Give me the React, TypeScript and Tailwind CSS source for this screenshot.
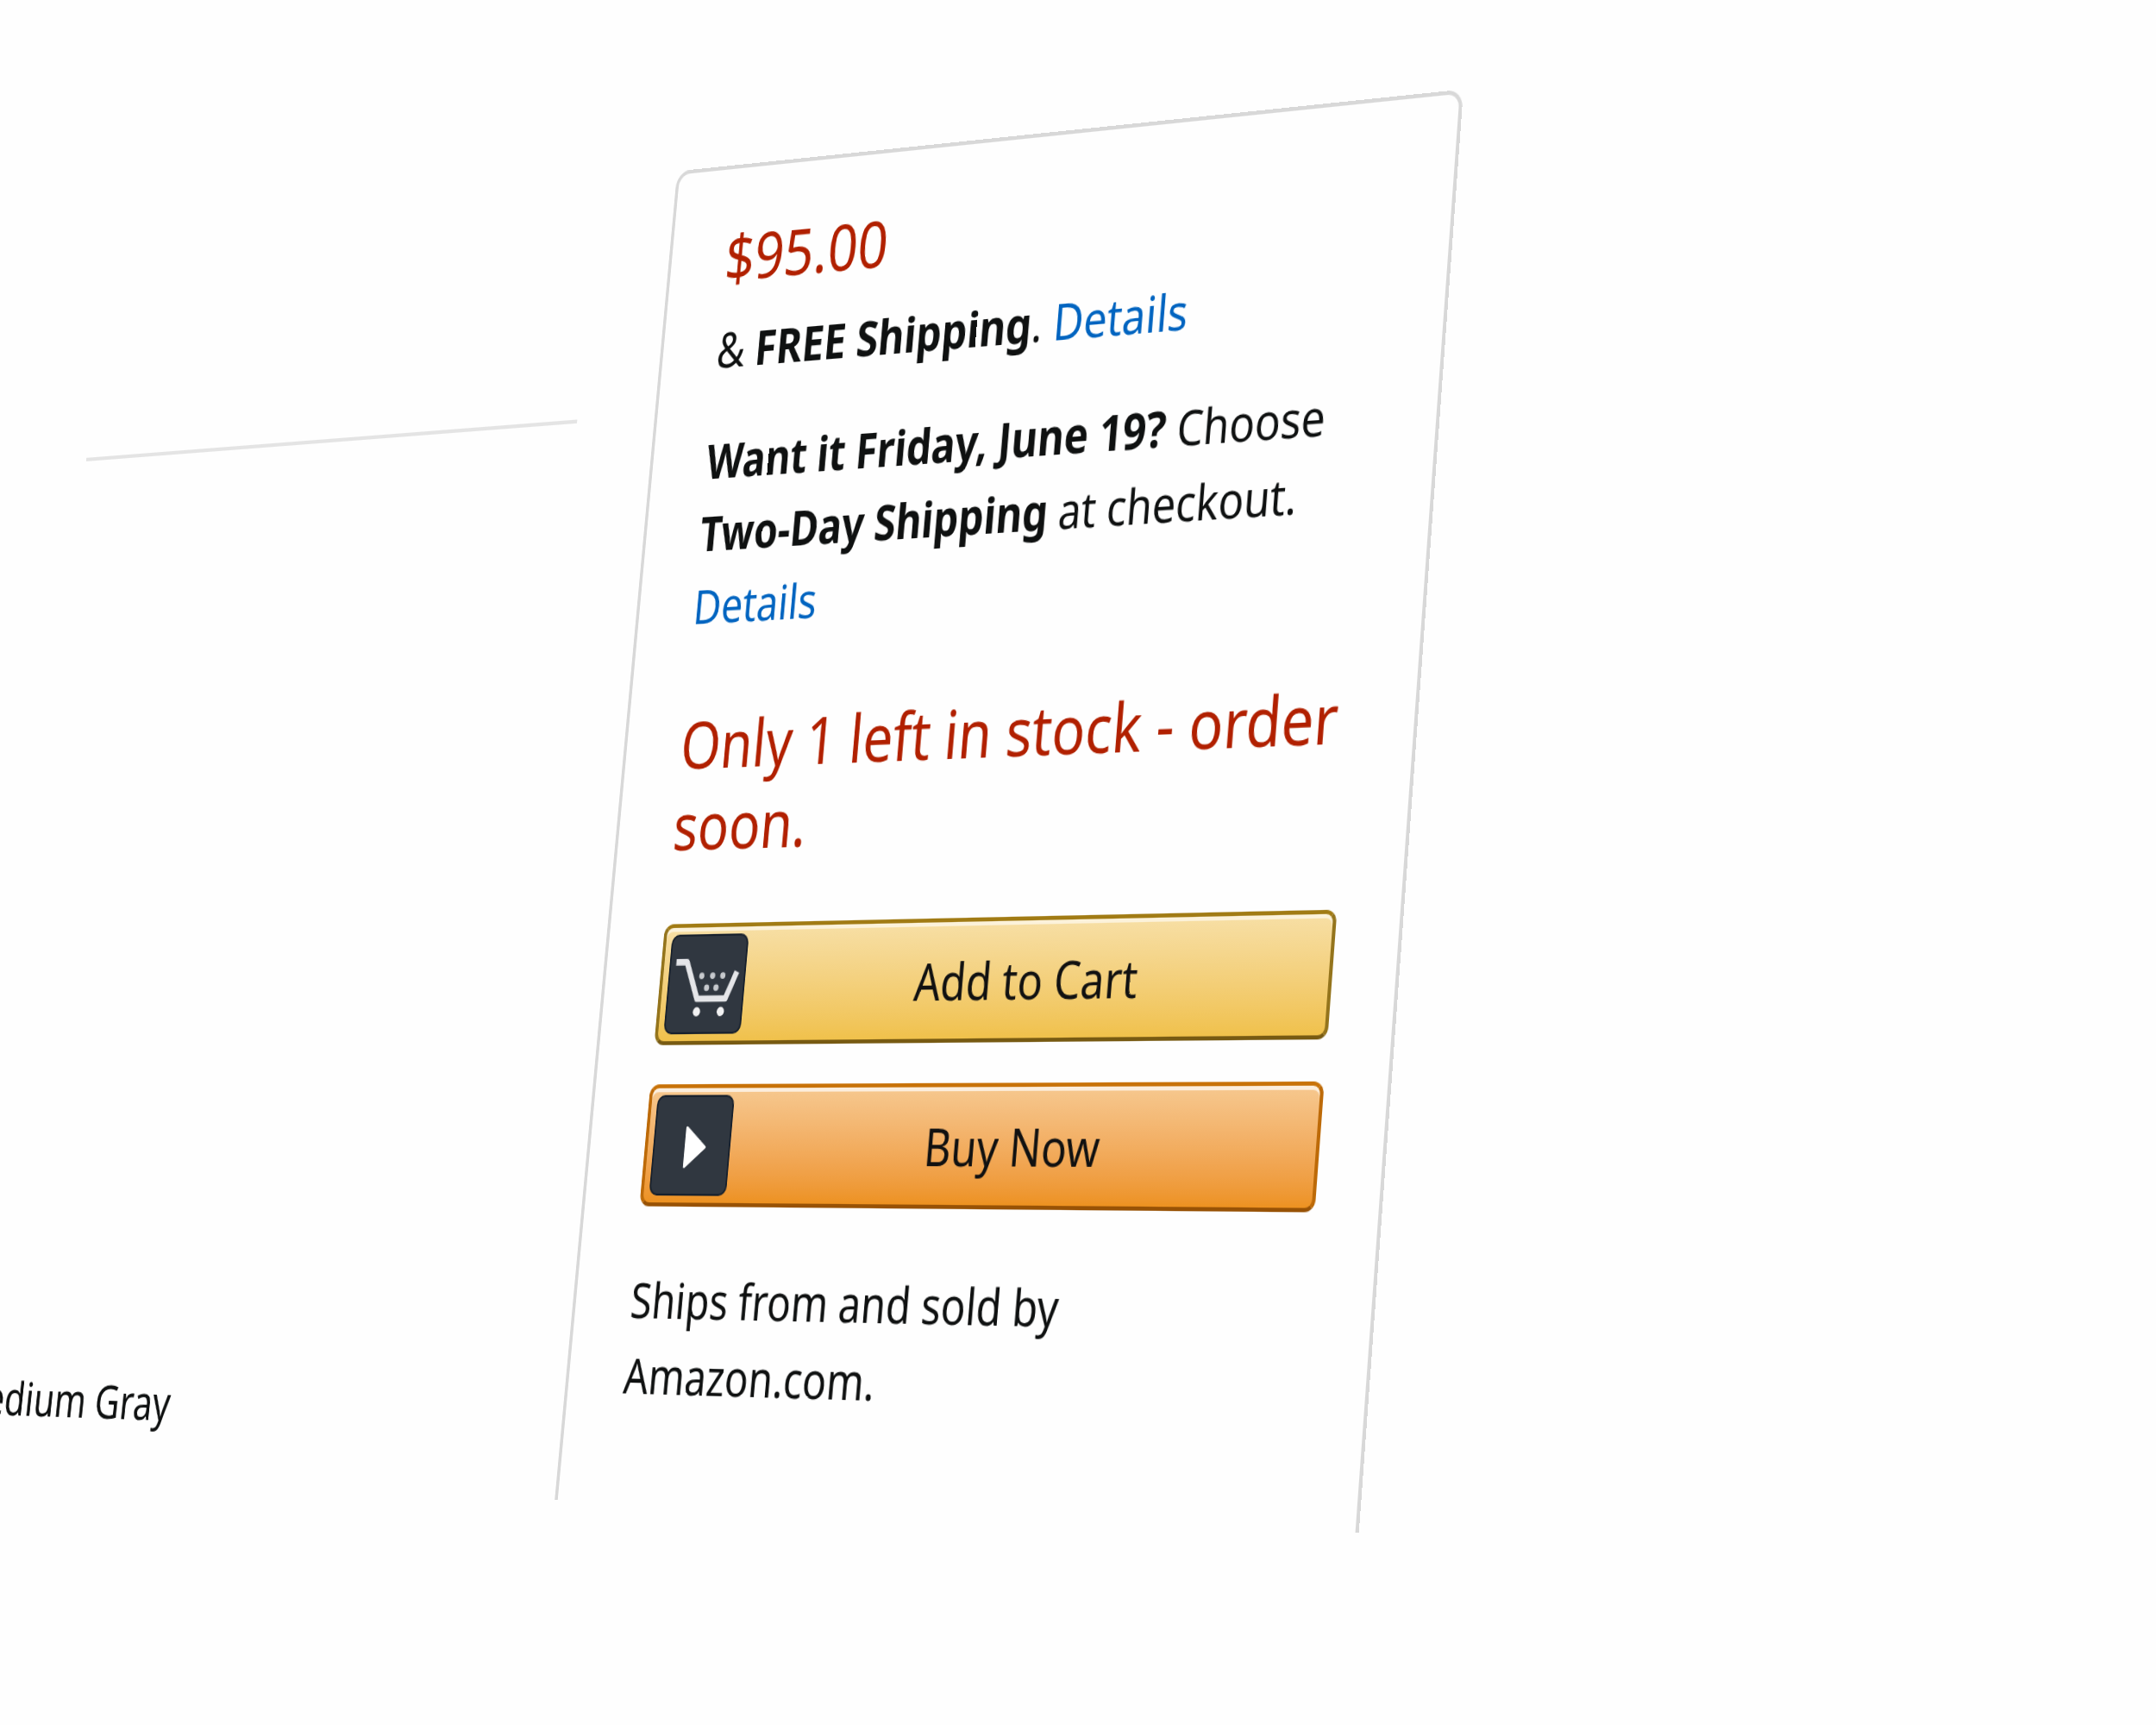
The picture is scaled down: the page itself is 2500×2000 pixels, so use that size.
import type { ReactNode } from "react";

function CartIcon() {
  return (
    <svg viewBox="0 0 102 102" className="size-full" aria-hidden="true">
      <path
        d="M7 27H22L40 67H79L92 38"
        fill="none"
        stroke="#e4e5e8"
        strokeWidth="7"
        strokeLinejoin="round"
      />
      <g fill="#c6c9cd">
        <circle cx="44" cy="42" r="3.600" />
        <circle cx="59" cy="42" r="3.600" />
        <circle cx="73" cy="42" r="3.600" />
        <circle cx="52" cy="55" r="3.600" />
        <circle cx="65" cy="55" r="3.600" />
      </g>
      <g fill="#f1f1f2">
        <circle cx="41" cy="81" r="5" />
        <circle cx="74" cy="81" r="5" />
      </g>
    </svg>
  );
}

function PlayIcon() {
  return (
    <svg viewBox="0 0 102 102" className="size-full" aria-hidden="true">
      <path
        d="M43 32L69 53L43 74Z"
        fill="#ffffff"
        stroke="#ffffff"
        strokeWidth="3"
        strokeLinejoin="round"
      />
    </svg>
  );
}

function BuyButton({
  icon,
  tone,
  children,
}: {
  icon: ReactNode;
  tone: string;
  children: ReactNode;
}) {
  return (
    <button
      type="button"
      className={`flex w-full items-center rounded-[12px] border-4 bg-linear-to-b p-[7px] text-[51px] leading-[76px] text-[#111111] ${tone}`}
    >
      <span className="h-[102px] w-[100px] shrink-0 rounded-[10px] border-2 border-[#17202c] bg-[#303740]">
        {icon}
      </span>
      <span className="flex-1 text-center">{children}</span>
    </button>
  );
}

function ProductColumn() {
  return (
    <section className="w-[755px] shrink-0 pt-[259px]">
      <hr className="ml-[46px] border-0 border-t-4 border-[#e4e4e4]" />
      <p className="mt-[996px] whitespace-nowrap text-[50px] leading-[76px]">
        Medium Gray
      </p>
    </section>
  );
}

function BuyBox() {
  return (
    <aside className="flex-1 rounded-t-[18px] border-4 border-b-0 border-[#d8d8d8] px-[72px] pt-[52px] pb-[90px] text-[50px] leading-[76px]">
      <p className="text-[68px] leading-[84px] text-[#b12000]">$95.00</p>
      <p className="mt-[18px] text-[51px]">
        &amp; <strong className="font-bold">FREE Shipping</strong>.{" "}
        <a href="#shipping" className="text-[#0064c0]">
          Details
        </a>
      </p>
      <p className="mt-[42px]">
        <strong className="font-bold">Want it Friday, June 19?</strong> Choose
        <br />
        <strong className="font-bold">Two-Day Shipping</strong> at checkout.
        <br />
        <a href="#delivery" className="text-[#0064c0]">
          Details
        </a>
      </p>
      <p className="mt-16 text-[67px] leading-[84px] text-[#b12000]">
        Only 1 left in stock - order
        <br />
        soon.
      </p>
      <div className="mt-[60px] flex flex-col gap-10">
        <BuyButton
          icon={<CartIcon />}
          tone="border-t-[#a17b14] border-x-[#94741c] border-b-[#775a12] from-[#f7dfa5] to-[#f0c14b] shadow-[inset_0_4px_0_rgba(255,255,255,0.6)]"
        >
          Add to Cart
        </BuyButton>
        <BuyButton
          icon={<PlayIcon />}
          tone="border-t-[#c87208] border-x-[#bd6a08] border-b-[#985205] from-[#f6c88f] to-[#ed9220] shadow-[inset_0_4px_0_rgba(255,255,255,0.7)]"
        >
          Buy Now
        </BuyButton>
      </div>
      <p className="mt-14">
        Ships from and sold by
        <br />
        Amazon.com.
      </p>
    </aside>
  );
}

export default function App() {
  return (
    <main className="min-h-screen overflow-hidden bg-[#fefefe] font-['Noto_Sans',sans-serif] text-[#0f1111]">
      {/* One tilted plane in perspective carries the whole page. */}
      <div className="flex w-full max-w-[1836px] origin-top-left gap-[105px] [transform:matrix3d(0.744616,-0.098837,0,-0.000075829,-0.110166,1.003608,0,-0.000021961,0,0,1,0,93.63,270.56,0,1)]">
        <ProductColumn />
        <BuyBox />
      </div>
    </main>
  );
}
